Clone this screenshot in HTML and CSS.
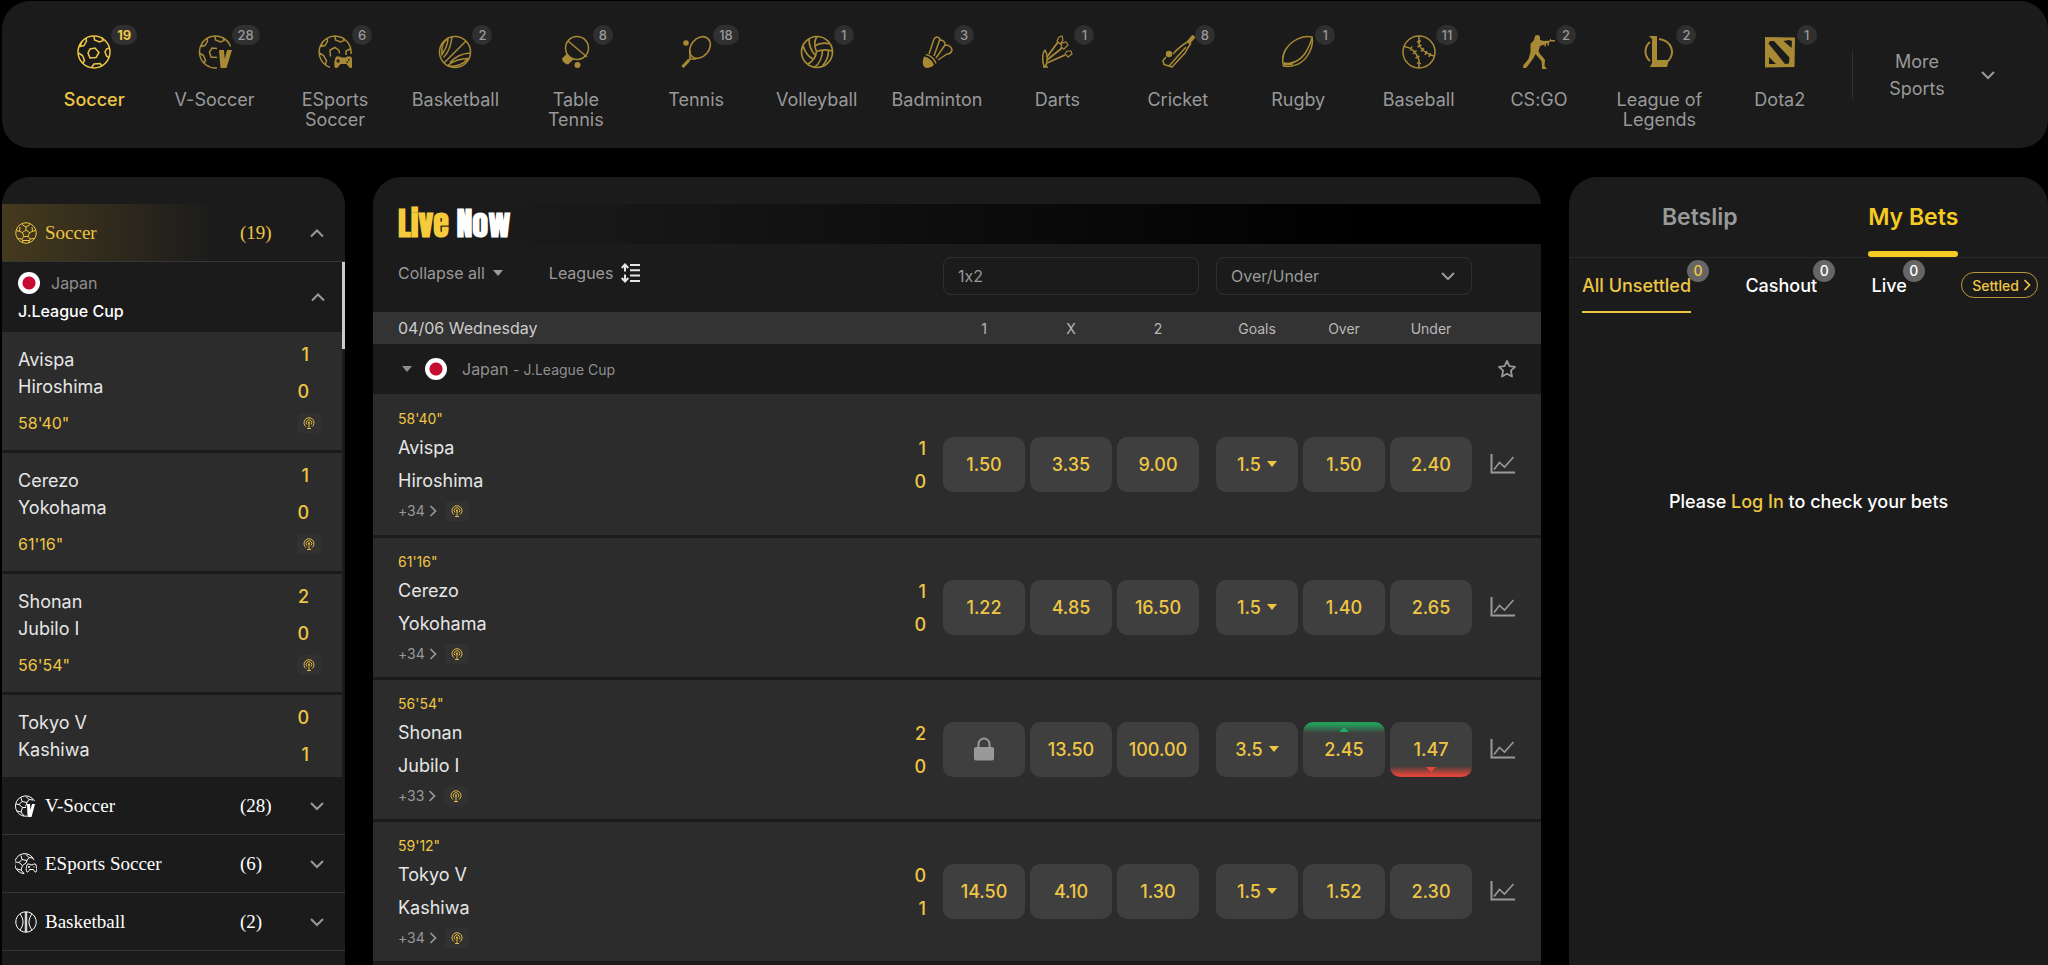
FILE: index.html
```html
<!DOCTYPE html>
<html lang="en">
  <head>
    <meta charset="UTF-8" />
    <meta name="viewport" content="width=device-width, initial-scale=1.0" />
    <title>Live Sports</title>
    <link rel="stylesheet" href="styles.css" />
  </head>
  <body>
    <!-- icon sprite -->
    <svg class="sprite" xmlns="http://www.w3.org/2000/svg">
      <symbol id="i-soccer" viewBox="0 0 34 34">
        <g fill="none" stroke="currentColor" stroke-width="1.5">
          <circle cx="17" cy="17" r="16" />
          <path d="M13 14l5-1 4 4.500-3 5-6 .5-2-5zM17 1.500l.5 3.500 5 2 3.500-1.500-1-3M5 6l-2 5.500 4-1L9.500 6l-.5-3M1.500 18l4 2.500 2 5-2 3M32.500 13l-3 1-1.500 3 1.500 4 2.500 1.500M14.500 32.500l2.500-3.500 6-.5 2.500 2.500" />
        </g>
      </symbol>
      <symbol id="i-vsoccer" viewBox="0 0 34 34">
        <g fill="none" stroke="currentColor" stroke-width="1.5">
          <path d="M19 32.900A16 16 0 1 1 32.500 11.500M19 13.500l-5-.5-2.500 4 1.500 5 6 .5M17 1.500l.5 3.500 5 2 3.500-1.500-1-3M5 6l-2 5.500 4-1L9.500 6l-.5-3M1.500 18l4 2.500 2 5-2 3" />
        </g>
        <path fill="currentColor" d="M21 15h5l.7 9L29 15h5l-5.500 18h-6z" />
      </symbol>
      <symbol id="i-esoccer" viewBox="0 0 34 34">
        <g fill="none" stroke="currentColor" stroke-width="1.5">
          <path d="M12 32.300A16 16 0 1 1 33 19M12.500 21.500L12 15l5-2.500 4 3 .5 3M17 1.500l.5 3.500 5 2 3.500-1.500-1-3M5 6l-2 5.500 4-1L9.500 6l-.5-3M1.500 18l4 2.500 3 5-1 4M28 20v-4l4-2" />
        </g>
        <path fill="currentColor" fill-rule="evenodd" d="M18 21.500h4l1 1h5l1-1h4c1.500 3 2 7 1.500 10-.5 2-2.500 2-4 0l-2-2.500h-6l-2 2.500c-1.500 2-3.500 2-4 0-.5-3 0-7 1.500-10zM19.500 24v1.200h-1.300v1.300h1.300V28h1.300v-1.500H22v-1.300h-1.200V24zM30 24v1.600h1.600V24zM28.500 26.500v1.500H30v-1.500z" />
      </symbol>
      <symbol id="i-basketball" viewBox="0 0 34 34">
        <g fill="none" stroke="currentColor" stroke-width="1.500">
          <circle cx="17" cy="17" r="15.500" />
          <path d="M28 6L6 28M14 2c-1 9-3 15-8.500 20.500M10 3.500c-5 3-7 9-6 16 3-5 6-9 6-16zM32 18c-8 .5-15 4-20 9.500M9.500 30.500c8 2 16-1 20.500-7-8 0-14 2-20.500 7z" />
        </g>
      </symbol>
      <symbol id="i-tabletennis" viewBox="0 0 34 34">
        <g fill="none" stroke="currentColor" stroke-width="1.500">
          <circle cx="18" cy="13" r="11.500" />
          <path d="M9 6l19 16" />
        </g>
        <path fill="currentColor" d="M8 18.500l6 6.500-5 4.500q-2 0-4-2t-2-4z" />
        <circle cx="18.500" cy="30" r="3" fill="currentColor" />
      </symbol>
      <symbol id="i-tennis" viewBox="0 0 34 34">
        <g fill="none" stroke="currentColor" stroke-width="1.600">
          <ellipse cx="21" cy="12.500" rx="9" ry="12" transform="rotate(40 21 12.500)" />
          <path d="M11 16v8M11 24h6M11 24l-7 8" />
        </g>
        <path d="M10 25l-6.500 7" stroke="currentColor" stroke-width="3" />
        <circle cx="7" cy="8" r="2.800" fill="currentColor" />
      </symbol>
      <symbol id="i-volleyball" viewBox="0 0 34 34">
        <g fill="none" stroke="currentColor" stroke-width="1.700">
          <circle cx="17" cy="17" r="15.500" />
          <path d="M16.500 16.500C14 11 14 6 17 1.500M16.500 16.500c5-2 11-2 15.500-.5M16.500 16.500C16 22 12 27 7 29.500M9 4c0 7 2.500 12 6 16M3 11c2 6 6 11 10 13M14.500 11c5-3 10-3.500 15-2M22.500 15.500c0 6-3 13-8 17M28.500 15.500c0 6-2 11-6 15.500" />
        </g>
      </symbol>
      <symbol id="i-badminton" viewBox="0 0 34 34">
        <path fill="none" stroke="currentColor" stroke-width="1.500" stroke-linejoin="round" d="M9 19L14 4q3-4 6 0l-6 17M20 5q5 0 5 5l-9 13M25 10q6 0 7 5-1 4-5 4l-9 6" />
        <path fill="none" stroke="currentColor" stroke-width="1.500" d="M6 19.500q7 1.500 10 9" />
        <path fill="currentColor" d="M4 21.500q7 1 10 8.500-4 4-9 2.500-4-3-1-11z" />
      </symbol>
      <symbol id="i-darts" viewBox="0 0 34 34">
        <path fill="none" stroke="currentColor" stroke-width="1.500" d="M5 15c-3 3-3 14 0 17M5 15c3 4 3 13 0 17M3 32h5" />
        <path stroke="currentColor" stroke-width="1.800" d="M7 22L18 7M7 25l15-12M7 28l18-8" />
        <g fill="none" stroke="currentColor" stroke-width="1.200">
          <path d="M17 6l2-4 3-1 1 4-3 4zM21 12l1-4 4-1 2 3-4 4zM25 19l2-3h4l1 3-4 3z" />
        </g>
      </symbol>
      <symbol id="i-cricket" viewBox="0 0 34 34">
        <path fill="none" stroke="currentColor" stroke-width="1.500" stroke-linejoin="round" d="M28 6Q19 11 12 19M30 8Q26 14 24 18L11 32l-8-2.500-1-4L5 22M8 31L25 12" />
        <path d="M27 8l6-7" stroke="currentColor" stroke-width="4" />
        <circle cx="8" cy="19" r="3.200" fill="currentColor" />
      </symbol>
      <symbol id="i-rugby" viewBox="0 0 34 34">
        <g fill="none" stroke="currentColor" stroke-width="1.500">
          <path d="M31 2c-9-2-20 3-26 12C1 20 1 25 2.500 31c10 2 20-3 25-12 4-7 4.500-12 3.500-17z" />
          <path d="M3 28c8 2 17-3 22-11 3-5 5-10 6-14" />
        </g>
        <path d="M2.500 27.500q6 2 11-1.500l-2 4-9 .5z" fill="currentColor" />
      </symbol>
      <symbol id="i-baseball" viewBox="0 0 34 34">
        <g fill="none" stroke="currentColor" stroke-width="1.500">
          <circle cx="17" cy="17" r="16" />
          <path d="M17 1v9q4 8 15 11M17 33v-8Q13 13 2.500 11.500M15 7l4-1M15.500 12l4-2M19 16.500l3-3.500M23 20l2-4M27 22l1.500-4M8 15.500l2-4M11 19l3.500-3.500M13.500 23l4-2M15 28l4 .5" />
        </g>
      </symbol>
      <symbol id="i-csgo" viewBox="0 0 34 34">
        <path fill="currentColor" d="M13 1q3-2 5 .5V5l4 1 6-.5V4h1v1h4v1.500h-5l-1 1v3h-1.500V8L24 9v2.500h-1.500V9.500L18 11l-1.500 5 1.500 3q3 3 5 6l-.5 6 2.500 3h-5v-3l-.5-5-6-7-2 4-5 7L4 33H1l.5-3 5-6 2-7V9L12 5z" />
      </symbol>
      <symbol id="i-lol" viewBox="0 0 34 34">
        <path fill="none" stroke="currentColor" stroke-width="2" d="M8 7C2 12 2 21 8 26M17 4c14 2 16 15 9 22" />
        <path fill="currentColor" d="M7 1h8v24h12l-2 7H8l2-4V4z" />
      </symbol>
      <symbol id="i-dota" viewBox="0 0 34 34">
        <path fill="currentColor" fill-rule="evenodd" d="M2 2l30 .5L31.500 32 2 32.500zM7 6l-1.500 2.500L22 29l4-.5.500-6L11 6zM20.500 6l8 7L29 6l-3-1zM6 22v7h7z" />
      </symbol>
      <!-- outline balls used in the side menu -->
      <symbol id="i-ball" viewBox="0 0 22 22">
        <path fill="none" stroke="currentColor" stroke-width="1" d="M11 .8a10.200 10.200 0 1 0 .01 0zM11 8l3.500 2.500-1.300 4H8.800l-1.300-4zM11 8V5M14.500 10.500l3-1M13.200 14.500l2 2.500M8.800 14.500l-2 2.500M7.500 10.500l-3-1M11 5L7 2.500M11 5l4-2.500M4.500 9.500l-3-1M4.500 9.500L5 5M17.500 9.500l3-1M17.500 9.500L17 5M6.800 17l-4-.5M6.800 17l1.500 3.500M15.200 17l4-.5M15.200 17l-1.500 3.500M8 18.500h6" />
      </symbol>
      <symbol id="i-vball" viewBox="0 0 22 22">
        <path fill="none" stroke="currentColor" stroke-width="1" d="M12 21.200A10.200 10.200 0 1 1 19.500 6M6 2.500l1 4-3 3-3-.5M7 6.500l5 1 2-3-3-3M4 9.500l3.500 3L6 17l-4-1M7.500 12.500h3.500M6 17l3 4M12 7.500l-1.500 4M14 4.500l4 .500" />
        <path fill="currentColor" d="M12 9h3l.4 6L17 9h3l-3.500 13h-4z" />
      </symbol>
      <symbol id="i-eball" viewBox="0 0 22 22">
        <path fill="none" stroke="currentColor" stroke-width="1" d="M9 20.600A10 10 0 1 1 19 7M6 2.500l1 4-3 3-3-.5M7 6.500l5 1 2-3-3-3M4 9.500l3.500 3L6 17l-4-1M7.500 12.500L11 10l1-2.500M6 17l3 3.500M14 4.500l4 .500M12.500 11h2l.5.800h3l.5-.800h2c1.500 3 1.800 6 .5 8-1 .5-2-1-2.500-2.500h-4C14 18 13 19.500 12 19c-1.300-2-1-5 .5-8zM13 14h2M14 13v2M18.500 14h1" />
      </symbol>
      <symbol id="i-basket" viewBox="0 0 22 22">
        <path fill="none" stroke="currentColor" stroke-width="1" d="M11 .8a10.200 10.200 0 1 0 .01 0zM10.300 1v20M11.700 1v20M5 3c4 5 4 11 0 16M17 3c-4 5-4 11 0 16" />
      </symbol>
      <symbol id="i-cast" viewBox="0 0 12 12">
        <path fill="none" stroke="currentColor" stroke-width="1" d="M3 9.700a5 5 0 1 1 6 0M4 7.500a2.800 2.800 0 1 1 4 0M6 5.500v6M4 11.500h4" />
        <circle cx="6" cy="5.500" r="1.100" fill="currentColor" />
      </symbol>
      <symbol id="i-up" viewBox="0 0 14 14">
        <path fill="none" stroke="currentColor" stroke-width="2" d="M1 10.500l6-6 6 6" />
      </symbol>
      <symbol id="i-down" viewBox="0 0 14 14">
        <path fill="none" stroke="currentColor" stroke-width="2" d="M1 4l6 6 6-6" />
      </symbol>
      <symbol id="i-right" viewBox="0 0 8 14">
        <path fill="none" stroke="currentColor" stroke-width="1.700" d="M1.500 2l5 5-5 5" />
      </symbol>
      <symbol id="i-caret" viewBox="0 0 10 6">
        <path fill="currentColor" d="M0 0h10L5 6z" />
      </symbol>
      <symbol id="i-sort" viewBox="0 0 20 20">
        <path fill="none" stroke="currentColor" stroke-width="2" d="M9 2h10M9 7.300h10M9 12.600h10M9 18h10M4 1.500v7M4 11.500v7M.7 5L4 1.500 7.300 5M.7 15L4 18.500 7.300 15" />
      </symbol>
      <symbol id="i-star" viewBox="0 0 20 20">
        <path fill="none" stroke="currentColor" stroke-width="1.800" stroke-linejoin="round" d="M10 2l2.400 5.200 5.600.7-4.100 3.800 1.100 5.800-5-2.800-5 2.800 1.100-5.800L2 7.900l5.600-.7z" />
      </symbol>
      <symbol id="i-chart" viewBox="0 0 25 20">
        <path fill="none" stroke="currentColor" stroke-width="2" d="M1.500 0v18.500H25" />
        <path fill="none" stroke="currentColor" stroke-width="1.600" d="M4 15.500l5.500-7 5 4.500L23.500 3" />
      </symbol>
      <symbol id="i-lock" viewBox="0 0 22 24">
        <path fill="none" stroke="currentColor" stroke-width="2" d="M5.500 11V7a5.500 5.500 0 0 1 11 0v4" />
        <rect x="1" y="10" width="20" height="13.500" rx="2" fill="currentColor" />
      </symbol>
    </svg>

    <div class="page">
      <header class="sports-bar">
        <nav class="sports">
          <a href="#" class="sport active"><span class="sport-icon"><svg><use href="#i-soccer" /></svg><span class="badge">19</span></span>Soccer</a>
          <a href="#" class="sport"><span class="sport-icon"><svg><use href="#i-vsoccer" /></svg><span class="badge">28</span></span>V-Soccer</a>
          <a href="#" class="sport"><span class="sport-icon"><svg><use href="#i-esoccer" /></svg><span class="badge">6</span></span>ESports Soccer</a>
          <a href="#" class="sport"><span class="sport-icon"><svg><use href="#i-basketball" /></svg><span class="badge">2</span></span>Basketball</a>
          <a href="#" class="sport"><span class="sport-icon"><svg><use href="#i-tabletennis" /></svg><span class="badge">8</span></span>Table Tennis</a>
          <a href="#" class="sport"><span class="sport-icon"><svg><use href="#i-tennis" /></svg><span class="badge">18</span></span>Tennis</a>
          <a href="#" class="sport"><span class="sport-icon"><svg><use href="#i-volleyball" /></svg><span class="badge">1</span></span>Volleyball</a>
          <a href="#" class="sport"><span class="sport-icon"><svg><use href="#i-badminton" /></svg><span class="badge">3</span></span>Badminton</a>
          <a href="#" class="sport"><span class="sport-icon"><svg><use href="#i-darts" /></svg><span class="badge">1</span></span>Darts</a>
          <a href="#" class="sport"><span class="sport-icon"><svg><use href="#i-cricket" /></svg><span class="badge">8</span></span>Cricket</a>
          <a href="#" class="sport"><span class="sport-icon"><svg><use href="#i-rugby" /></svg><span class="badge">1</span></span>Rugby</a>
          <a href="#" class="sport"><span class="sport-icon"><svg><use href="#i-baseball" /></svg><span class="badge">11</span></span>Baseball</a>
          <a href="#" class="sport"><span class="sport-icon"><svg><use href="#i-csgo" /></svg><span class="badge">2</span></span>CS:GO</a>
          <a href="#" class="sport"><span class="sport-icon"><svg><use href="#i-lol" /></svg><span class="badge">2</span></span>League of Legends</a>
          <a href="#" class="sport"><span class="sport-icon"><svg><use href="#i-dota" /></svg><span class="badge">1</span></span>Dota2</a>
        </nav>
        <button type="button" class="more-sports">
          <span class="more-label">More Sports</span>
          <svg class="chevron"><use href="#i-down" /></svg>
        </button>
      </header>

      <div class="columns">
        <aside class="panel side-menu">
          <button type="button" class="menu-row menu-open">
            <svg class="menu-icon"><use href="#i-ball" /></svg>
            <span>Soccer</span>
            <span>(19)</span>
            <svg class="chevron"><use href="#i-up" /></svg>
          </button>

          <div class="side-scroll">
            <div class="side-list">
              <button type="button" class="side-league">
                <span class="side-league-text">
                  <span class="side-country"><span class="flag"></span>Japan</span>
                  <span class="side-cup">J.League Cup</span>
                </span>
                <svg class="chevron"><use href="#i-up" /></svg>
              </button>
              <a href="#" class="side-match">
                <span class="side-teams">Avispa<br />Hiroshima</span>
                <span class="side-score"><span>1</span><span>0</span></span>
                <span class="side-time">58'40"</span>
                <span class="cast"><svg><use href="#i-cast" /></svg></span>
              </a>
              <a href="#" class="side-match">
                <span class="side-teams">Cerezo<br />Yokohama</span>
                <span class="side-score"><span>1</span><span>0</span></span>
                <span class="side-time">61'16"</span>
                <span class="cast"><svg><use href="#i-cast" /></svg></span>
              </a>
              <a href="#" class="side-match">
                <span class="side-teams">Shonan<br />Jubilo I</span>
                <span class="side-score"><span>2</span><span>0</span></span>
                <span class="side-time">56'54"</span>
                <span class="cast"><svg><use href="#i-cast" /></svg></span>
              </a>
              <a href="#" class="side-match">
                <span class="side-teams">Tokyo V<br />Kashiwa</span>
                <span class="side-score"><span>0</span><span>1</span></span>
              </a>
            </div>
            <div class="side-thumb"></div>
          </div>

          <button type="button" class="menu-row">
            <svg class="menu-icon"><use href="#i-vball" /></svg>
            <span>V-Soccer</span>
            <span>(28)</span>
            <svg class="chevron"><use href="#i-down" /></svg>
          </button>
          <button type="button" class="menu-row">
            <svg class="menu-icon"><use href="#i-eball" /></svg>
            <span>ESports Soccer</span>
            <span>(6)</span>
            <svg class="chevron"><use href="#i-down" /></svg>
          </button>
          <button type="button" class="menu-row">
            <svg class="menu-icon"><use href="#i-basket" /></svg>
            <span>Basketball</span>
            <span>(2)</span>
            <svg class="chevron"><use href="#i-down" /></svg>
          </button>
        </aside>

        <main class="panel live">
          <h1 class="live-title"><span class="gold">Live</span> Now</h1>

          <div class="toolbar">
            <div class="toolbar-left">
              <button type="button" class="tool">Collapse all <svg class="caret"><use href="#i-caret" /></svg></button>
              <button type="button" class="tool">Leagues <svg class="sort"><use href="#i-sort" /></svg></button>
            </div>
            <input class="market" type="text" value="1x2" aria-label="First market" readonly />
            <div class="market-select">
              <select class="market" aria-label="Second market">
                <option>Over/Under</option>
              </select>
              <svg class="chevron"><use href="#i-down" /></svg>
            </div>
          </div>

          <table class="odds-table">
            <colgroup>
              <col />
              <col class="col-score" />
              <col class="col-odd" />
              <col class="col-odd" />
              <col class="col-odd-last" />
              <col class="col-odd" />
              <col class="col-odd" />
              <col class="col-odd" />
              <col class="col-chart" />
            </colgroup>
            <thead>
              <tr>
                <th class="date" colspan="2">04/06 Wednesday</th>
                <th>1</th>
                <th>X</th>
                <th class="split">2</th>
                <th>Goals</th>
                <th>Over</th>
                <th>Under</th>
                <th></th>
              </tr>
            </thead>
            <tbody>
              <tr class="league-row">
                <td colspan="8">
                  <div class="league">
                    <svg class="caret"><use href="#i-caret" /></svg>
                    <span class="flag"></span>
                    <span>Japan <small>- J.League Cup</small></span>
                  </div>
                </td>
                <td>
                  <button type="button" class="icon-btn" aria-label="Favourite"><svg class="star"><use href="#i-star" /></svg></button>
                </td>
              </tr>
              <tr class="match-row">
                <td class="match">
                  <div class="time">58'40"</div>
                  <div class="team">Avispa</div>
                  <div class="team">Hiroshima</div>
                  <div class="extra"><a href="#">+34 <svg class="arrow"><use href="#i-right" /></svg></a><span class="cast"><svg><use href="#i-cast" /></svg></span></div>
                </td>
                <td class="score"><div>1</div><div>0</div></td>
                <td><button type="button" class="odd">1.50</button></td>
                <td><button type="button" class="odd">3.35</button></td>
                <td><button type="button" class="odd">9.00</button></td>
                <td><button type="button" class="odd">1.5 <svg class="caret"><use href="#i-caret" /></svg></button></td>
                <td><button type="button" class="odd">1.50</button></td>
                <td><button type="button" class="odd">2.40</button></td>
                <td><button type="button" class="icon-btn" aria-label="Statistics"><svg class="chart"><use href="#i-chart" /></svg></button></td>
              </tr>
              <tr class="match-row">
                <td class="match">
                  <div class="time">61'16"</div>
                  <div class="team">Cerezo</div>
                  <div class="team">Yokohama</div>
                  <div class="extra"><a href="#">+34 <svg class="arrow"><use href="#i-right" /></svg></a><span class="cast"><svg><use href="#i-cast" /></svg></span></div>
                </td>
                <td class="score"><div>1</div><div>0</div></td>
                <td><button type="button" class="odd">1.22</button></td>
                <td><button type="button" class="odd">4.85</button></td>
                <td><button type="button" class="odd">16.50</button></td>
                <td><button type="button" class="odd">1.5 <svg class="caret"><use href="#i-caret" /></svg></button></td>
                <td><button type="button" class="odd">1.40</button></td>
                <td><button type="button" class="odd">2.65</button></td>
                <td><button type="button" class="icon-btn" aria-label="Statistics"><svg class="chart"><use href="#i-chart" /></svg></button></td>
              </tr>
              <tr class="match-row">
                <td class="match">
                  <div class="time">56'54"</div>
                  <div class="team">Shonan</div>
                  <div class="team">Jubilo I</div>
                  <div class="extra"><a href="#">+33 <svg class="arrow"><use href="#i-right" /></svg></a><span class="cast"><svg><use href="#i-cast" /></svg></span></div>
                </td>
                <td class="score"><div>2</div><div>0</div></td>
                <td><button type="button" class="odd" aria-label="Locked"><svg class="lock"><use href="#i-lock" /></svg></button></td>
                <td><button type="button" class="odd">13.50</button></td>
                <td><button type="button" class="odd">100.00</button></td>
                <td><button type="button" class="odd">3.5 <svg class="caret"><use href="#i-caret" /></svg></button></td>
                <td><button type="button" class="odd odd-up">2.45</button></td>
                <td><button type="button" class="odd odd-down">1.47</button></td>
                <td><button type="button" class="icon-btn" aria-label="Statistics"><svg class="chart"><use href="#i-chart" /></svg></button></td>
              </tr>
              <tr class="match-row">
                <td class="match">
                  <div class="time">59'12"</div>
                  <div class="team">Tokyo V</div>
                  <div class="team">Kashiwa</div>
                  <div class="extra"><a href="#">+34 <svg class="arrow"><use href="#i-right" /></svg></a><span class="cast"><svg><use href="#i-cast" /></svg></span></div>
                </td>
                <td class="score"><div>0</div><div>1</div></td>
                <td><button type="button" class="odd">14.50</button></td>
                <td><button type="button" class="odd">4.10</button></td>
                <td><button type="button" class="odd">1.30</button></td>
                <td><button type="button" class="odd">1.5 <svg class="caret"><use href="#i-caret" /></svg></button></td>
                <td><button type="button" class="odd">1.52</button></td>
                <td><button type="button" class="odd">2.30</button></td>
                <td><button type="button" class="icon-btn" aria-label="Statistics"><svg class="chart"><use href="#i-chart" /></svg></button></td>
              </tr>
            </tbody>
          </table>
        </main>

        <aside class="panel bets">
          <div class="bets-tabs">
            <button type="button" class="bets-tab">Betslip</button>
            <button type="button" class="bets-tab active">My Bets</button>
          </div>
          <div class="filters">
            <button type="button" class="filter active">All Unsettled<span class="count">0</span></button>
            <button type="button" class="filter">Cashout<span class="count">0</span></button>
            <button type="button" class="filter">Live<span class="count">0</span></button>
            <button type="button" class="settled">Settled <svg class="arrow"><use href="#i-right" /></svg></button>
          </div>
          <p class="login-note">Please <a href="#">Log In</a> to check your bets</p>
        </aside>
      </div>
    </div>
  </body>
</html>
```

FILE: styles.css
```css
* {
  box-sizing: border-box;
}

body {
  margin: 0;
  background: #000;
  color: #fff;
  font-family: Inter, "Liberation Sans", sans-serif;
  font-size: 18px;
  font-variant-ligatures: no-contextual;
}

button,
input,
select {
  font: inherit;
  font-variant-ligatures: no-contextual;
  color: inherit;
  background: none;
  border: none;
  margin: 0;
  padding: 0;
}

button {
  cursor: pointer;
}

a {
  color: inherit;
  text-decoration: none;
}

svg {
  display: block;
  flex-shrink: 0;
}

.sprite {
  display: none;
}

.page {
  height: 100vh;
  display: flex;
  flex-direction: column;
  gap: 29px;
  padding: 1px 0 0 2px;
  overflow: hidden;
}

/* sports bar */
.sports-bar {
  display: flex;
  align-items: center;
  min-height: 147px;
  padding-left: 32px;
  background: #1b1b1b;
  border-radius: 28px;
  color: #999;
}

.sports {
  flex: 1;
  align-self: stretch;
  display: grid;
  grid-template-columns: repeat(15, 1fr);
  padding-top: 34px;
}

.sport {
  display: flex;
  flex-direction: column;
  align-items: center;
  gap: 21px;
  padding: 0 12px;
  line-height: 20px;
  text-align: center;
}

.sport-icon {
  position: relative;
  color: #a88a35;
}

.sport-icon svg {
  width: 34px;
  height: 34px;
}

.badge {
  position: absolute;
  left: 100%;
  top: -10px;
  min-width: 20px;
  padding: 0 6px;
  border-radius: 10px;
  background: #303030;
  color: #999;
  font-size: 13px;
  font-weight: 500;
  line-height: 20px;
}

.sport.active,
.sport.active .sport-icon,
.sport.active .badge {
  color: #efc644;
}

.sport.active {
  font-weight: 500;
}

.sport.active .badge {
  font-weight: 700;
}

.chevron {
  width: 14px;
  height: 14px;
  color: #999;
}

.more-sports {
  display: flex;
  align-items: center;
  gap: 24px;
  height: 48px;
  margin-left: 12px;
  padding: 0 53px 0 24px;
  border-left: 1px solid #333;
}

.more-label {
  width: 80px;
  line-height: 27px;
}

/* columns */
.columns {
  flex: 1;
  min-height: 0;
  display: grid;
  grid-template-columns: 343px 1fr 479px;
  gap: 28px;
}

.panel {
  background: #1b1b1b;
  border-radius: 28px 28px 0 0;
  overflow: hidden;
}

/* side menu */
.side-menu {
  padding-top: 27px;
}

.menu-row {
  display: grid;
  grid-template-columns: 22px 1fr 62px 14px;
  column-gap: 8px;
  align-items: center;
  width: 100%;
  height: 58px;
  padding: 0 21px 0 13px;
  border-bottom: 1px solid #363636;
  font-family: "Liberation Serif", serif;
  font-size: 19px;
  text-align: left;
}

.menu-open {
  color: #efc644;
  background: linear-gradient(90deg, #453a1e, #1b1b1b 62%);
}

.menu-icon {
  width: 22px;
  height: 22px;
}

.side-scroll {
  display: flex;
  height: 515px;
  overflow: hidden;
}

.side-list {
  flex: 1;
}

.side-thumb {
  width: 3px;
  height: 87px;
  background: #ccc;
}

.side-league {
  display: flex;
  align-items: center;
  justify-content: space-between;
  width: 100%;
  height: 70px;
  padding: 0 17px 0 16px;
  font-size: 16px;
  text-align: left;
}

.side-country {
  display: flex;
  align-items: center;
  gap: 11px;
  height: 28px;
  color: #8f8f8f;
}

.side-cup {
  display: block;
  height: 28px;
  line-height: 28px;
  font-weight: 500;
}

.flag {
  width: 22px;
  height: 22px;
  flex-shrink: 0;
  border-radius: 50%;
  background: radial-gradient(circle, #c60c30 6px, #fff 7px);
}

.side-match {
  display: grid;
  grid-template-columns: 1fr 24px;
  align-content: start;
  row-gap: 11px;
  height: 118px;
  margin-bottom: 3px;
  padding: 14px 21px 0 16px;
  background: #2c2c2c;
  color: #e6e6e6;
}

.side-teams {
  line-height: 27px;
}

.side-score {
  display: flex;
  flex-direction: column;
  justify-content: space-between;
  width: 12px;
  line-height: 17px;
  text-align: right;
  font-weight: 500;
  color: #efc644;
}

.side-time {
  font-size: 16px;
  line-height: 24px;
  color: #efc644;
}

.cast {
  display: flex;
  align-items: center;
  justify-content: center;
  width: 24px;
  height: 20px;
  border-radius: 4px;
  background: #313131;
  color: #e0b840;
}

.cast svg {
  width: 12px;
  height: 12px;
}

.side-match .cast {
  align-self: center;
}

/* live matches */
.live {
  padding-top: 27px;
}

.live-title {
  margin: 0;
  padding-left: 25px;
  background: linear-gradient(90deg, #1b1b1b 10%, #000 85%);
  font-family: Impact, Anton, "Open Sans Condensed", "Roboto Condensed", Roboto, sans-serif;
  font-size: 32px;
  font-weight: 700;
  line-height: 40px;
}

.gold {
  color: #f5cb3c;
}

.toolbar {
  display: flex;
  gap: 17px;
  padding: 13px 69px 17px 25px;
  font-size: 16px;
  color: #999;
}

.toolbar-left {
  flex: 1;
  display: flex;
  align-items: flex-start;
  gap: 46px;
}

.tool {
  display: flex;
  align-items: center;
  gap: 8px;
  line-height: 32px;
}

.caret {
  width: 10px;
  height: 6px;
}

.sort {
  width: 20px;
  height: 20px;
  color: #e6e6e6;
}

.market {
  width: 256px;
  height: 38px;
  padding: 0 14px;
  border: 1px solid #303030;
  border-radius: 8px;
  appearance: none;
}

.market-select {
  position: relative;
}

.market-select .chevron {
  position: absolute;
  right: 17px;
  top: 12px;
  pointer-events: none;
}

.odds-table {
  width: 100%;
  table-layout: fixed;
  border-collapse: collapse;
}

.col-score {
  width: 60px;
}

.col-odd {
  width: 87px;
}

.col-odd-last {
  width: 99px;
}

.col-chart {
  width: 64px;
}

.odds-table th,
.odds-table td {
  padding: 0;
}

.odds-table th {
  height: 32px;
  padding-right: 5px;
  background: #333;
  color: #b8b8b8;
  font-size: 14px;
  font-weight: 400;
}

.odds-table th.split {
  padding-right: 17px;
}

.odds-table th.date {
  padding-left: 25px;
  font-size: 16px;
  text-align: left;
  color: #ccc;
}

.league-row td {
  height: 50px;
}

.league {
  display: flex;
  align-items: center;
  padding-left: 29px;
  font-size: 16px;
  color: #8f8f8f;
}

.league .flag {
  margin: 0 15px 0 13px;
}

.league small {
  font-size: 14px;
}

.icon-btn {
  display: flex;
  justify-content: center;
  width: 50px;
  color: #999;
}

.star {
  width: 20px;
  height: 20px;
  margin-left: 10px;
}

.chart {
  width: 25px;
  height: 20px;
}

.match-row td {
  height: 142px;
  background: #2c2c2c;
  border-bottom: 3px solid #1b1b1b;
}

.odds-table .match {
  padding: 3px 0 0 25px;
  color: #e6e6e6;
}

.time {
  font-size: 14px;
  line-height: 24px;
  color: #efc644;
}

.team,
.score div {
  line-height: 33px;
}

.extra {
  display: flex;
  align-items: center;
  gap: 8px;
  height: 28px;
  font-size: 14px;
  color: #999;
}

.extra a {
  display: flex;
  align-items: center;
  gap: 4px;
}

.arrow {
  width: 8px;
  height: 14px;
}

.odds-table .score {
  padding: 2px 17px 0 0;
  text-align: right;
  font-weight: 500;
  color: #efc644;
}

.odd {
  display: flex;
  align-items: center;
  justify-content: center;
  gap: 6px;
  width: 82px;
  height: 55px;
  border-radius: 10px;
  background: #3f3f3f;
  color: #efc644;
  font-weight: 500;
}

.lock {
  width: 22px;
  height: 24px;
  color: #999;
}

.odd-up,
.odd-down {
  position: relative;
}

.odd-up {
  background: linear-gradient(#249f5c 2px, #3f3f3f 11px);
}

.odd-down {
  background: linear-gradient(0deg, #dc4437 2px, #3f3f3f 11px);
}

.odd-up::after,
.odd-down::after {
  content: "";
  position: absolute;
  left: 50%;
  margin-left: -5px;
  border: 5px solid transparent;
}

.odd-up::after {
  top: 0;
  border-bottom-color: #22a862;
}

.odd-down::after {
  bottom: 0;
  border-top-color: #e8483c;
}

/* bets */
.bets-tabs {
  display: grid;
  grid-template-columns: 1fr 1fr;
  justify-items: center;
  padding: 0 28px 0 24px;
  border-bottom: 1px solid #292929;
}

.bets-tab {
  height: 80px;
  border-bottom: 6px solid transparent;
  border-top: 6px solid transparent;
  font-size: 23px;
  font-weight: 600;
  color: #999;
}

.bets-tab.active {
  position: relative;
  color: #f5cb23;
}

.bets-tab.active::after {
  content: "";
  position: absolute;
  left: 0;
  right: 0;
  bottom: -6px;
  height: 6px;
  border-radius: 3px;
  background: #f5cb23;
}

.filters {
  display: flex;
  justify-content: space-between;
  padding: 0 10px 0 13px;
}

.filter {
  position: relative;
  padding: 16px 0 13px;
  border-bottom: 2px solid transparent;
  font-weight: 500;
  line-height: 24px;
}

.filter.active {
  color: #efc644;
  border-color: #efc644;
}

.count {
  position: absolute;
  left: 100%;
  top: 2px;
  width: 22px;
  margin-left: -4px;
  border-radius: 50%;
  background: #666;
  font-size: 14px;
  font-weight: 500;
  line-height: 22px;
}

.settled {
  display: flex;
  align-items: center;
  gap: 4px;
  height: 26px;
  margin-top: 14px;
  padding: 0 6px 0 10px;
  border: 1px solid #b8963a;
  border-radius: 13px;
  color: #efc644;
  font-size: 14px;
  font-weight: 500;
}

.login-note {
  margin: 0;
  padding: 177px 16px 0;
  line-height: 24px;
  text-align: center;
  font-weight: 500;
}

.login-note a {
  color: #efc644;
}
```
